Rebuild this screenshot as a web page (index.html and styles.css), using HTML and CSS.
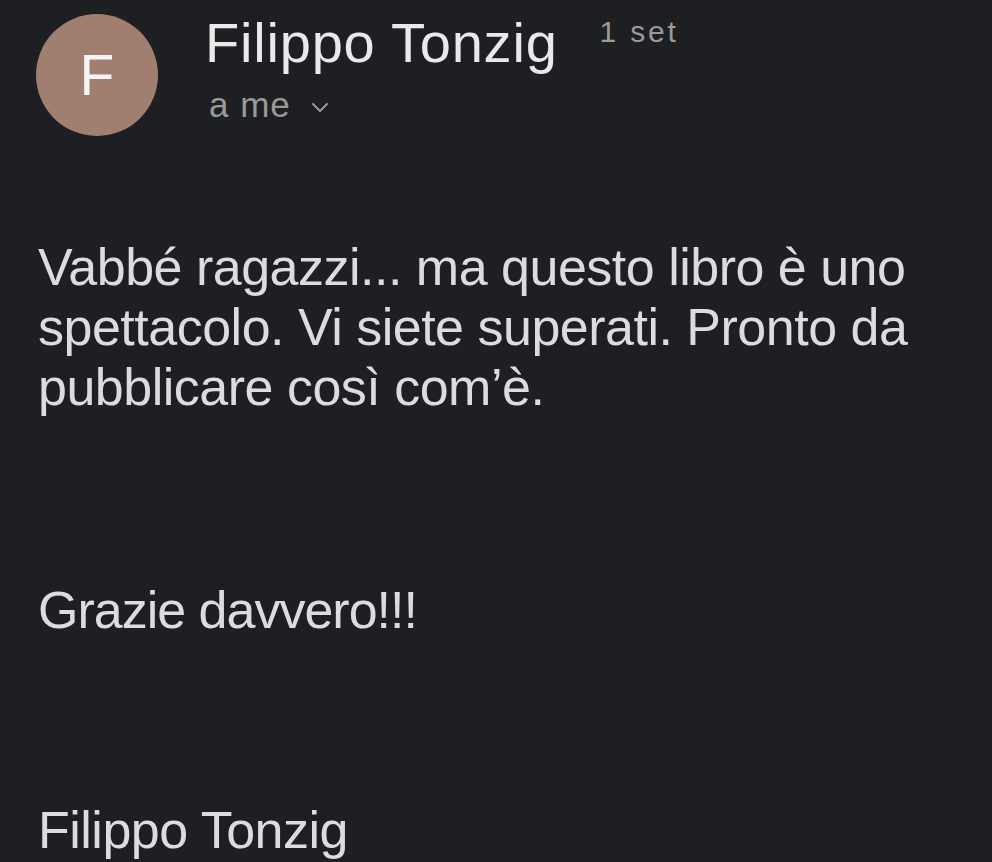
FILE: index.html
```html
<!DOCTYPE html>
<html lang="it">
<head>
    <meta charset="UTF-8">
    <meta name="viewport" content="width=device-width, initial-scale=1.0">
    <title>Filippo Tonzig</title>
    <link rel="stylesheet" href="styles.css">
</head>
<body>
    <div class="mail">
        <div class="header">
            <div class="avatar">F</div>
            <div class="meta">
                <div class="top-row">
                    <span class="sender">Filippo Tonzig</span>
                    <span class="date">1 set</span>
                </div>
                <div class="recipient">
                    a me
                    <svg class="chevron" width="18" height="11" viewBox="0 0 18 11">
                        <path d="M2 2 L9 9 L16 2" fill="none" stroke="#9a9a9c" stroke-width="2" stroke-linecap="round" stroke-linejoin="round"/>
                    </svg>
                </div>
            </div>
        </div>

        <div class="body">
            <p class="para first">Vabbé ragazzi... ma questo libro è uno spettacolo. Vi siete superati. Pronto da pubblicare così com’è.</p>
            <p class="para thanks">Grazie davvero!!!</p>
            <p class="para signature">Filippo Tonzig</p>
        </div>
    </div>
</body>
</html>
```

FILE: styles.css
```css
html, body {
    margin: 0;
    padding: 0;
    background-color: #1e1f23;
}

body {
    font-family: "Liberation Sans", Arial, sans-serif;
    color: #dcdcde;
    height: 862px;
    overflow: hidden;
}

.mail {
    padding: 14px 0 0 36px;
}

.header {
    display: flex;
    align-items: flex-start;
}

.avatar {
    width: 122px;
    height: 122px;
    border-radius: 50%;
    background: #a07f71;
    color: #f4f4f4;
    font-size: 57px;
    display: flex;
    justify-content: center;
    align-items: center;
    flex-shrink: 0;
}

.meta {
    margin-left: 47px;
}

.top-row {
    display: flex;
    align-items: flex-start;
}

.sender {
    font-size: 56px;
    line-height: 58px;
    letter-spacing: 0.8px;
    color: #e9e9ea;
}

.date {
    font-size: 30px;
    line-height: 32px;
    letter-spacing: 2.8px;
    color: #9a9a9a;
    margin-left: 42px;
    margin-top: 2px;
}

.recipient {
    margin-top: 15px;
    font-size: 35px;
    line-height: 36px;
    letter-spacing: 1px;
    color: #9a9a9a;
    display: flex;
    align-items: center;
    gap: 20px;
    padding-left: 4px;
}

.chevron {
    margin-top: 4px;
}

.body {
    margin-top: 101px;
    padding-left: 2px;
    width: 920px;
}

.para {
    margin: 0;
    font-size: 52px;
    line-height: 60px;
    letter-spacing: -0.5px;
}

.thanks {
    margin-top: 163px;
    letter-spacing: -1px;
}

.signature {
    margin-top: 160px;
}
```
